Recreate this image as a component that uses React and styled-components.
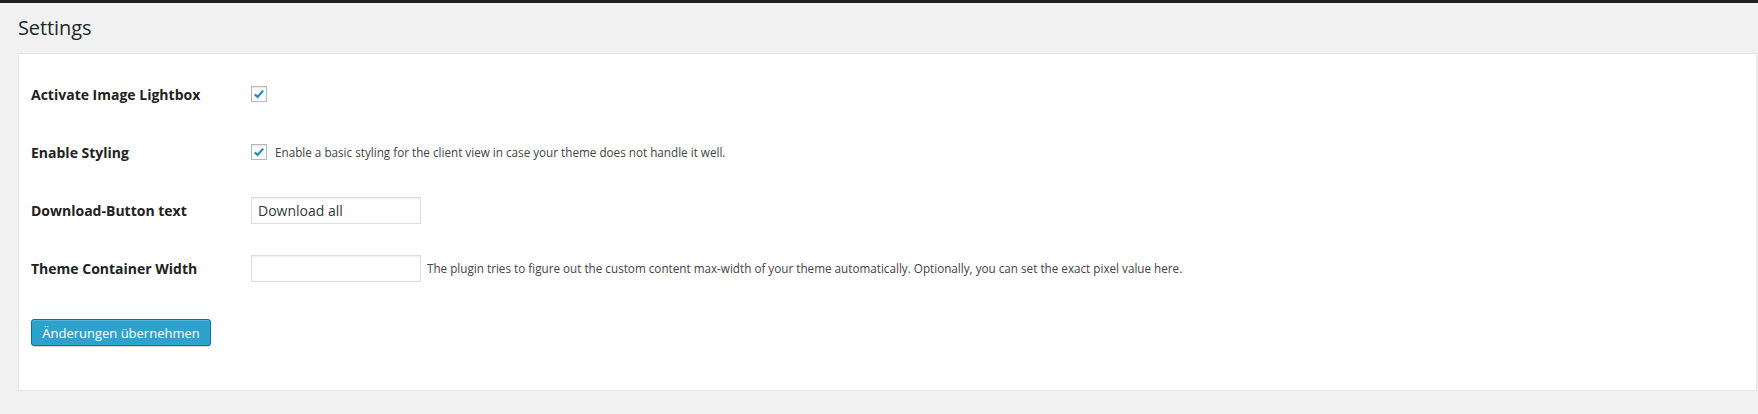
import React from "react";
import styled, { createGlobalStyle } from "styled-components";

const GlobalStyle = createGlobalStyle`
  html, body { margin: 0; padding: 0; }
  body {
    background: #f1f1f1;
    font-family: "Open Sans", "Noto Sans", sans-serif;
    color: #444;
  }
`;

const TopBar = styled.div`
  height: 3px;
  background: #222;
`;

const Page = styled.div`
  padding: 0 1px 0 18px;
`;

const Title = styled.h2`
  margin: 0;
  height: 50px;
  box-sizing: border-box;
  padding-bottom: 2px;
  display: flex;
  align-items: center;
  font-size: 20px;
  font-weight: 400;
  color: #23282d;
  letter-spacing: -0.1px;
`;

const Panel = styled.form`
  background: #fff;
  border: 1px solid #e5e5e5;
  box-shadow: 0 1px 1px rgba(0, 0, 0, 0.04);
  padding: 11px 12px 44px 12px;
  height: 338px;
  box-sizing: border-box;
`;

const Row = styled.div`
  display: grid;
  grid-template-columns: 220px 1fr;
  align-items: center;
  height: 58px;
`;

const Label = styled.div`
  font-size: 14px;
  font-weight: 700;
  color: #222;
`;

const Field = styled.div`
  display: flex;
  align-items: center;
`;

const Box = styled.span`
  width: 16px;
  height: 16px;
  box-sizing: border-box;
  border: 1px solid #b4b9be;
  box-shadow: inset 0 1px 2px rgba(0, 0, 0, 0.1);
  background: #fff;
  display: inline-flex;
  align-items: center;
  justify-content: center;
  flex: none;
`;

const Description = styled.span`
  font-size: 11.7px;
  color: #444;
  margin-left: ${(p) => p.$gap}px;
  white-space: nowrap;
`;

const Input = styled.div`
  width: 170px;
  height: 27px;
  box-sizing: border-box;
  border: 1px solid #ddd;
  box-shadow: inset 0 1px 2px rgba(0, 0, 0, 0.07);
  font-size: 14px;
  color: #32373c;
  padding: 0 6px;
  display: flex;
  align-items: center;
  flex: none;
`;

const Submit = styled.div`
  margin-top: 22px;
  width: 180px;
  height: 27px;
  box-sizing: border-box;
  background: #2ea2cc;
  border: 1px solid #0074a2;
  border-radius: 3px;
  box-shadow: inset 0 1px 0 rgba(120, 200, 230, 0.5), 0 1px 0 rgba(0, 0, 0, 0.15);
  color: #fff;
  font-size: 13px;
  display: flex;
  align-items: center;
  justify-content: center;
`;

const Check = ({ checked }) => (
  <Box>
    {checked && (
      <svg width="12" height="12" viewBox="0 0 12 12">
        <path d="M1.8 6.4 L4.6 9 L10.2 2.6" fill="none" stroke="#1e8cbe" strokeWidth="2.2" strokeLinecap="butt" strokeLinejoin="miter" />
      </svg>
    )}
  </Box>
);

export default function App() {
  return (
    <>
      <GlobalStyle />
      <TopBar />
      <Page>
        <Title>Settings</Title>
        <Panel>
          <Row>
            <Label>Activate Image Lightbox</Label>
            <Field>
              <Check checked />
            </Field>
          </Row>
          <Row>
            <Label>Enable Styling</Label>
            <Field>
              <Check checked />
              <Description $gap={8}>
                Enable a basic styling for the client view in case your theme does not handle it well.
              </Description>
            </Field>
          </Row>
          <Row>
            <Label>Download-Button text</Label>
            <Field>
              <Input>Download all</Input>
            </Field>
          </Row>
          <Row>
            <Label>Theme Container Width</Label>
            <Field>
              <Input />
              <Description $gap={6}>
                The plugin tries to figure out the custom content max-width of your theme automatically. Optionally, you can set the exact pixel value here.
              </Description>
            </Field>
          </Row>
          <Submit>Änderungen übernehmen</Submit>
        </Panel>
      </Page>
    </>
  );
}
